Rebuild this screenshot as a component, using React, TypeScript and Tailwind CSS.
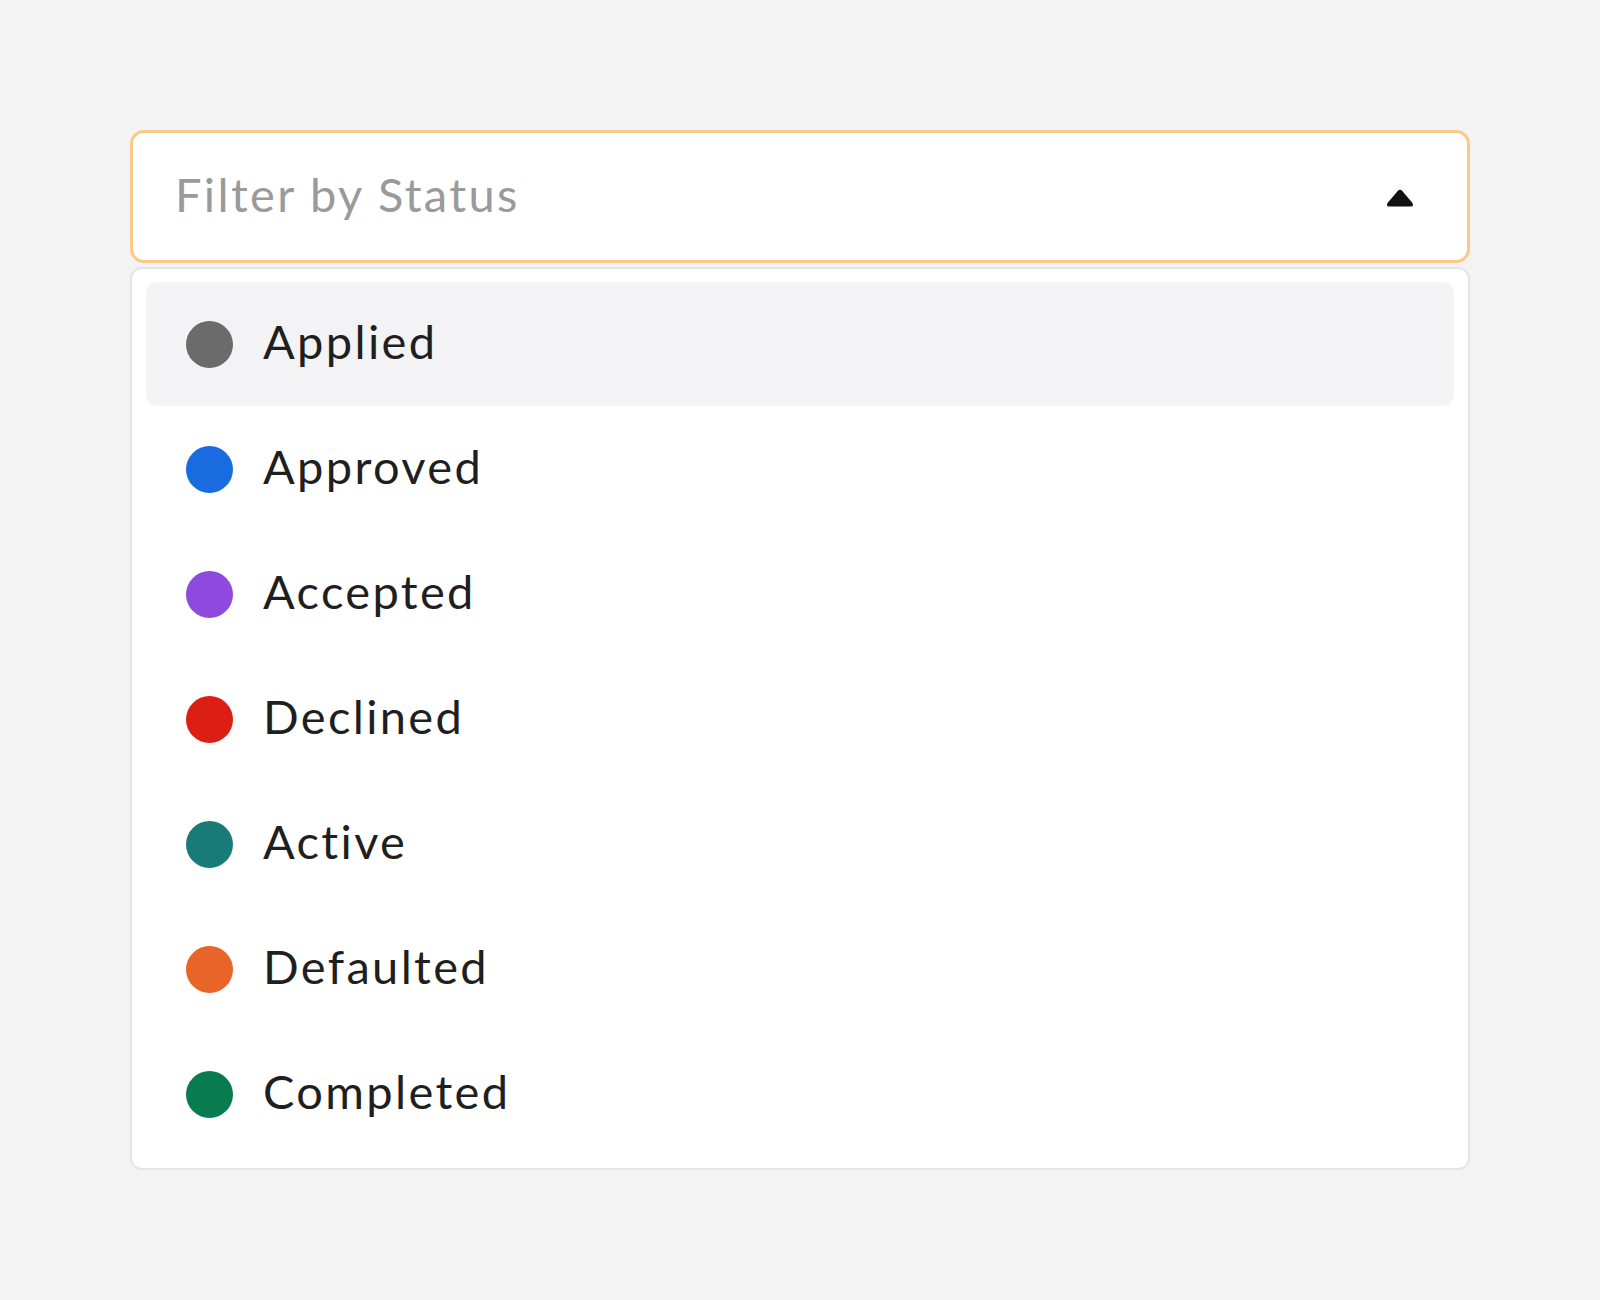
import React from 'react';

const statuses = [
  { label: 'Applied', dot: 'bg-[#6b6b6b]' },
  { label: 'Approved', dot: 'bg-[#1a6be0]' },
  { label: 'Accepted', dot: 'bg-[#8e4ade]' },
  { label: 'Declined', dot: 'bg-[#dc1f14]' },
  { label: 'Active', dot: 'bg-[#1a7a78]' },
  { label: 'Defaulted', dot: 'bg-[#e86428]' },
  { label: 'Completed', dot: 'bg-[#087c50]' },
];

const App: React.FC = () => {
  return (
    <div className="min-h-screen bg-[#f3f3f3] px-[130px] pt-[130px] font-['Lato',sans-serif]">
      {/* trigger */}
      <div className="flex h-[133px] items-center justify-between rounded-[14px] border-[3px] border-[#fcc888] bg-white pl-[42px] pr-[53px]">
        <span className="mb-[5px] text-[47px] leading-none tracking-[0.05em] text-[#9a9a9a]">Filter by Status</span>
        <svg width="28" height="19" viewBox="0 0 28 19" className="mt-[4px]">
          <path d="M11.5 2.2 Q14 -0.5 16.5 2.2 L26.3 13.8 Q28.4 17.5 24.5 17.5 L3.5 17.5 Q-0.4 17.5 1.7 13.8 Z" fill="#111" />
        </svg>
      </div>

      {/* menu */}
      <div className="mt-[4px] flex flex-col gap-px rounded-[12px] border-2 border-[#e4e4e9] bg-white px-[14px] pt-[13px] pb-[12px]">
        {statuses.map((s, i) => (
          <div
            key={s.label}
            className={`flex h-[124px] items-center gap-[30px] rounded-[12px] pl-[40px] ${i === 0 ? 'bg-[#f3f3f5]' : ''}`}
          >
            <span className={`h-[47px] w-[47px] shrink-0 rounded-full ${s.dot}`} />
            <span className="mb-[5px] text-[47px] leading-none tracking-[0.05em] text-[#1f1f1f]">{s.label}</span>
          </div>
        ))}
      </div>
    </div>
  );
};

export default App;
